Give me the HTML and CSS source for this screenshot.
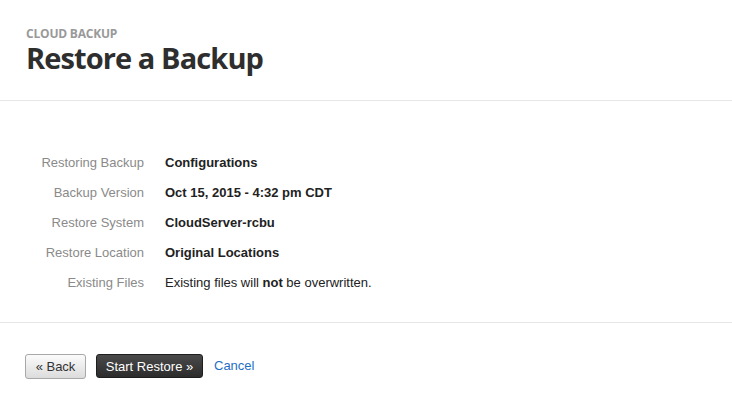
FILE: index.html
```html
<!DOCTYPE html>
<html>
<head>
<meta charset="utf-8">
<link rel="stylesheet" href="styles.css">
</head>
<body>
<header class="page-header">
  <div class="eyebrow">CLOUD BACKUP</div>
  <h1 class="title">Restore a Backup</h1>
</header>
<section class="details">
  <div class="row"><div class="label">Restoring Backup</div><div class="value strong">Configurations</div></div>
  <div class="row"><div class="label">Backup Version</div><div class="value strong">Oct 15, 2015 - 4:32 pm CDT</div></div>
  <div class="row"><div class="label">Restore System</div><div class="value strong">CloudServer-rcbu</div></div>
  <div class="row"><div class="label">Restore Location</div><div class="value strong">Original Locations</div></div>
  <div class="row"><div class="label">Existing Files</div><div class="value">Existing files will <b>not</b> be overwritten.</div></div>
</section>
<footer class="actions">
  <button class="btn btn-light">« Back</button>
  <button class="btn btn-dark">Start Restore »</button>
  <a class="link" href="#">Cancel</a>
</footer>
</body>
</html>
```
FILE: styles.css
```css
html, body { margin: 0; padding: 0; background: #fff; }
body { font-family: "Liberation Sans", Arial, sans-serif; font-size: 13px; color: #333; }
.page-header { padding: 26px 26px 0; box-sizing: border-box; height: 101px; border-bottom: 1px solid #e6e6e6; }
.eyebrow { font-family: "Open Sans", sans-serif; font-weight: 700; font-size: 12px; color: #999; line-height: 16px; letter-spacing: -0.2px; }
.title { margin: 0; font-family: "Open Sans", sans-serif; font-weight: 700; font-size: 29px; line-height: 32px; color: #2e2e2e; letter-spacing: -0.9px; }
.details { padding: 46px 0 25px; border-bottom: 1px solid #e6e6e6; }
.row { display: flex; height: 30px; align-items: center; }
.label { width: 144px; text-align: right; color: #8a8a8a; }
.value { margin-left: 21px; color: #222; }
.strong { font-weight: 700; }
.value b { font-weight: 700; }
.actions { display: flex; align-items: flex-start; padding: 31px 25px; gap: 10px; }
.btn { font-family: "Liberation Sans", Arial, sans-serif; font-size: 13px; height: 25px; padding: 0; white-space: nowrap; border-radius: 3px; cursor: pointer; box-sizing: border-box; }
.btn-light { width: 61px; background: linear-gradient(#fbfbfb, #dcdcdc); border: 1px solid #a8a8a8; color: #333; }
.btn-dark { width: 107px; height: 24px; background: linear-gradient(#4a4a4a, #2c2c2c); border: 1px solid #1e1e1e; color: #fff; }
.link { color: #1f6fc6; text-decoration: none; margin-left: 1px; line-height: 24px; }
```
